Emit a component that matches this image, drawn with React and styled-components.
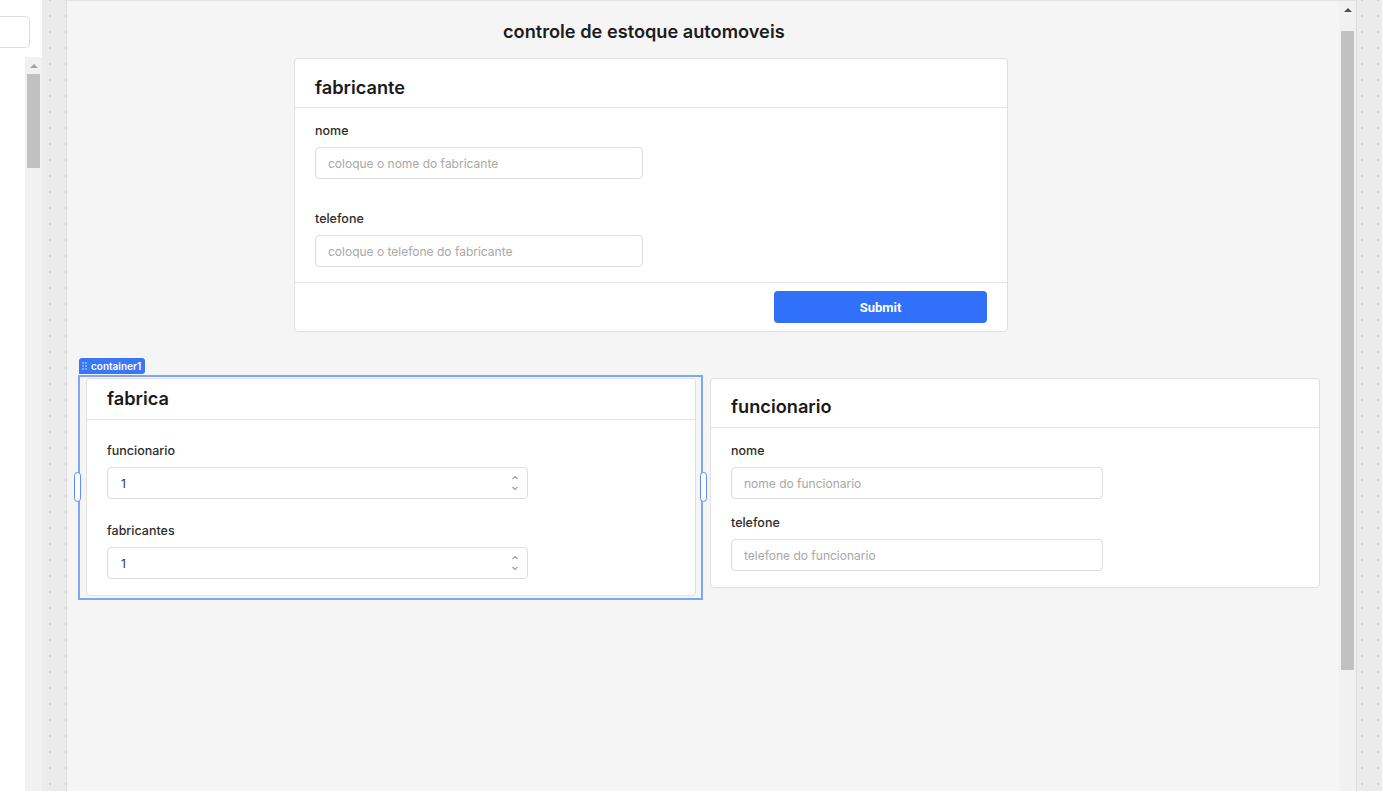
import styled, { createGlobalStyle } from "styled-components";

const GlobalStyle = createGlobalStyle`
  html, body {
    margin: 0;
    padding: 0;
    height: 100%;
    overflow: hidden;
  }
  body {
    font-family: Inter, "Noto Sans", sans-serif;
    background: #fff;
    color: #1c1c1c;
  }
  * { box-sizing: border-box; }
`;

function App() {
  return (
    <Page>
      <GlobalStyle />
      <LeftPanel>
        <LeftTop>
          <SearchStub />
        </LeftTop>
        <LeftBottom>
          <Blank />
          <ScrollTrack>
            <Arrow $muted />
            <Thumb $top={6} $height={94} />
          </ScrollTrack>
        </LeftBottom>
      </LeftPanel>
      <Gutter $offset={0} />
      <Canvas>
        <CanvasBody>
          <Title>controle de estoque automoveis</Title>

          <TopRow>
            <Card $width={714}>
              <CardHeader>
                <CardTitle>fabricante</CardTitle>
              </CardHeader>
              <CardBody $pt={14} $pb={15} $gap={31}>
                <Field>
                  <Label>nome</Label>
                  <TextInput $width={328} placeholder="coloque o nome do fabricante" />
                </Field>
                <Field>
                  <Label>telefone</Label>
                  <TextInput $width={328} placeholder="coloque o telefone do fabricante" />
                </Field>
              </CardBody>
              <CardFooter>
                <SubmitButton>Submit</SubmitButton>
              </CardFooter>
            </Card>
          </TopRow>

          <BottomRow>
            <Selection>
              <Tag>
                <GripIcon />
                container1
              </Tag>
              <Handle $side="left" />
              <Handle $side="right" />
              <Card $width={610}>
                <CardHeader $pt={7} $pb={9}>
                  <CardTitle>fabrica</CardTitle>
                </CardHeader>
                <CardBody $pt={22} $pb={16} $gap={23}>
                  <Field>
                    <Label>funcionario</Label>
                    <NumberInput width={421} value="1" />
                  </Field>
                  <Field>
                    <Label>fabricantes</Label>
                    <NumberInput width={421} value="1" />
                  </Field>
                </CardBody>
              </Card>
            </Selection>

            <SideCard $width={610}>
              <CardHeader $pt={15} $pb={9}>
                <CardTitle>funcionario</CardTitle>
              </CardHeader>
              <CardBody $pt={14} $pb={16} $gap={15}>
                <Field>
                  <Label>nome</Label>
                  <TextInput $width={372} placeholder="nome do funcionario" />
                </Field>
                <Field>
                  <Label>telefone</Label>
                  <TextInput $width={372} placeholder="telefone do funcionario" />
                </Field>
              </CardBody>
            </SideCard>
          </BottomRow>
        </CanvasBody>
        <ScrollTrack $right>
          <Arrow />
          <Thumb $top={19} $height={639} />
        </ScrollTrack>
      </Canvas>
      <Gutter $offset={-3} />
    </Page>
  );
}

function NumberInput({ width, value }) {
  return (
    <SpinBox $width={width}>
      <SpinValue>{value}</SpinValue>
      <Spinner>
        <svg width="8" height="5" viewBox="0 0 8 5">
          <polyline points="1.5,4 4,1.5 6.5,4" fill="none" stroke="#9a9a9a" strokeWidth="1.1" />
        </svg>
        <svg width="8" height="5" viewBox="0 0 8 5">
          <polyline points="1.5,1 4,3.5 6.5,1" fill="none" stroke="#9a9a9a" strokeWidth="1.1" />
        </svg>
      </Spinner>
    </SpinBox>
  );
}

function GripIcon() {
  return (
    <svg width="6" height="8" viewBox="0 0 6 8">
      {[1, 4].map((x) =>
        [1, 4, 7].map((y) => <circle key={x + "-" + y} cx={x} cy={y} r="0.8" fill="#dbe6ff" />)
      )}
    </svg>
  );
}

const Page = styled.div`
  display: flex;
  height: 100vh;
  overflow: hidden;
`;

const LeftPanel = styled.div`
  width: 42px;
  display: flex;
  flex-direction: column;
  background: #fff;
`;

const LeftTop = styled.div`
  height: 57px;
  padding-top: 16px;
`;

const SearchStub = styled.div`
  width: 30px;
  height: 32px;
  border: 1px solid #dedede;
  border-left: none;
  border-radius: 0 5px 5px 0;
`;

const LeftBottom = styled.div`
  flex: 1;
  display: flex;
`;

const Blank = styled.div`
  width: 25px;
`;

const ScrollTrack = styled.div`
  position: relative;
  width: 17px;
  flex-shrink: 0;
  background: #f1f1f1;
  ${(p) => p.$right && "border-right: 1px solid #dcdcdc; width: 18px;"}
`;

const Arrow = styled.div`
  width: 0;
  height: 0;
  margin: 7px auto 0;
  border-left: 4px solid transparent;
  border-right: 4px solid transparent;
  border-bottom: 4px solid ${(p) => (p.$muted ? "#a3a3a3" : "#505050")};
`;

const Thumb = styled.div`
  position: absolute;
  left: 2px;
  width: 13px;
  top: ${(p) => p.$top + 11}px;
  height: ${(p) => p.$height}px;
  background: #c1c1c1;
`;

const Gutter = styled.div`
  width: ${(p) => (p.$offset ? 25 : 24)}px;
  flex-shrink: 0;
  background-color: #ebebeb;
  background-image: radial-gradient(circle, #d3d3d3 1px, transparent 1.2px);
  background-size: 16px 16px;
  background-position: ${(p) => p.$offset}px -8px;
`;

const Canvas = styled.div`
  flex: 1;
  display: flex;
  background: #f5f5f5;
  border-left: 1px solid #dcdcdc;
  border-top: 1px solid #e2e2e2;
`;

const CanvasBody = styled.div`
  flex: 1;
  display: flex;
  flex-direction: column;
  padding-top: 19px;
`;

const Title = styled.h1`
  margin: 0 0 0 436px;
  font-size: 18.2px;
  line-height: 22px;
  font-weight: 600;
  color: #1c1c1c;
`;

const TopRow = styled.div`
  display: flex;
  margin: 16px 0 0 227px;
`;

const Card = styled.div`
  width: ${(p) => p.$width}px;
  background: #fff;
  border: 1px solid #e0e0e0;
  border-radius: 4px;
`;

const SideCard = styled(Card)`
  margin: 3px 0 0 7px;
`;

const CardHeader = styled.div`
  padding: ${(p) => p.$pt ?? 16}px 20px ${(p) => p.$pb ?? 8}px;
  border-bottom: 1px solid #e4e4e4;
`;

const CardTitle = styled.h2`
  margin: 0;
  font-size: 18.2px;
  line-height: 24px;
  font-weight: 600;
  color: #1a1a1a;
`;

const CardBody = styled.div`
  display: flex;
  flex-direction: column;
  gap: ${(p) => p.$gap}px;
  padding: ${(p) => p.$pt}px 20px ${(p) => p.$pb}px;
`;

const Field = styled.div`
  display: flex;
  flex-direction: column;
  gap: 7px;
`;

const Label = styled.label`
  font-size: 12.5px;
  line-height: 18px;
  font-weight: 500;
  color: #2d2d2d;
`;

const TextInput = styled.input`
  width: ${(p) => p.$width}px;
  height: 32px;
  padding: 0 12px;
  border: 1px solid #dedede;
  border-radius: 4px;
  background: #fff;
  font-family: Inter, "Noto Sans", sans-serif;
  font-size: 12px;
  color: #333;
  outline: none;
  &::placeholder {
    color: #a8a8a8;
  }
`;

const SpinBox = styled.div`
  width: ${(p) => p.$width}px;
  height: 32px;
  display: flex;
  align-items: center;
  justify-content: space-between;
  padding: 0 8px 0 13px;
  border: 1px solid #dedede;
  border-radius: 4px;
  background: #fff;
`;

const SpinValue = styled.span`
  font-size: 12px;
  color: #333;
`;

const Spinner = styled.div`
  display: flex;
  flex-direction: column;
  gap: 6px;
`;

const CardFooter = styled.div`
  display: flex;
  justify-content: flex-end;
  padding: 8px 20px;
  border-top: 1px solid #e4e4e4;
`;

const SubmitButton = styled.button`
  width: 213px;
  height: 32px;
  border: none;
  border-radius: 4px;
  background: #3170f9;
  color: #fff;
  font-family: Roboto, "Liberation Sans", sans-serif;
  font-size: 13px;
  font-weight: 700;
`;

const BottomRow = styled.div`
  display: flex;
  align-items: flex-start;
  margin: 43px 0 0 11px;
`;

const Selection = styled.div`
  position: relative;
  width: 625px;
  padding: 1px 5px 2px 6px;
  border: 2px solid #7ea6f8;
`;

const Tag = styled.div`
  position: absolute;
  left: -1px;
  top: -19px;
  height: 16px;
  display: flex;
  align-items: center;
  gap: 3px;
  padding: 0 4px 0 3px;
  background: #3b76f6;
  border-radius: 3px 3px 3px 0;
  color: #fff;
  font-size: 10px;
  font-weight: 600;
`;

const Handle = styled.div`
  position: absolute;
  top: 95px;
  ${(p) => (p.$side === "left" ? "left: -6px;" : "right: -6px;")}
  width: 7px;
  height: 30px;
  background: #fff;
  border: 1.5px solid #5b8ff5;
  border-radius: 4px;
`;

export default App;
